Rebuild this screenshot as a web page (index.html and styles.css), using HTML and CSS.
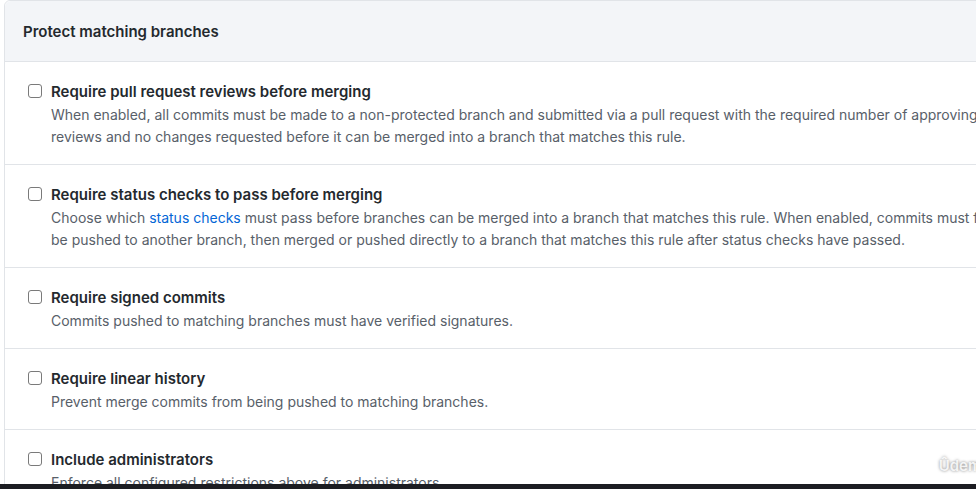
FILE: index.html
```html
<!DOCTYPE html>
<html>
<head>
<meta charset="utf-8">
<link rel="stylesheet" href="styles.css">
</head>
<body>
<div class="stage">
  <div class="card">
    <div class="card-header">Protect matching branches</div>
    <div class="rule">
      <span class="checkbox"></span>
      <div class="rule-body">
        <div class="rule-title">Require pull request reviews before merging</div>
        <div class="rule-desc">When enabled, all commits must be made to a non-protected branch and submitted via a pull request with the required number of approving reviews and no changes requested before it can be merged into a branch that matches this rule.</div>
      </div>
    </div>
    <div class="rule">
      <span class="checkbox"></span>
      <div class="rule-body">
        <div class="rule-title">Require status checks to pass before merging</div>
        <div class="rule-desc">Choose which <a class="link" href="#">status checks</a> must pass before branches can be merged into a branch that matches this rule. When enabled, commits must first be pushed to another branch, then merged or pushed directly to a branch that matches this rule after status checks have passed.</div>
      </div>
    </div>
    <div class="rule">
      <span class="checkbox"></span>
      <div class="rule-body">
        <div class="rule-title">Require signed commits</div>
        <div class="rule-desc">Commits pushed to matching branches must have verified signatures.</div>
      </div>
    </div>
    <div class="rule">
      <span class="checkbox"></span>
      <div class="rule-body">
        <div class="rule-title">Require linear history</div>
        <div class="rule-desc">Prevent merge commits from being pushed to matching branches.</div>
      </div>
    </div>
    <div class="rule">
      <span class="checkbox"></span>
      <div class="rule-body">
        <div class="rule-title">Include administrators</div>
        <div class="rule-desc">Enforce all configured restrictions above for administrators.</div>
      </div>
    </div>
  </div>
  <div class="watermark">Ûdemy</div>
  <div class="player-bar"></div>
</div>
</body>
</html>
```
FILE: styles.css
```css
html, body {
  margin: 0;
  padding: 0;
  background: #fff;
  overflow: hidden;
}
.stage {
  position: relative;
  width: 976px;
  height: 489px;
  overflow: hidden;
  font-family: Inter, "Noto Sans", sans-serif;
}
.card {
  margin-left: 4px;
  width: 1060px;
  border: 1px solid #e1e4e8;
  border-radius: 6px;
  background: #fff;
}
.card-header {
  height: 61px;
  box-sizing: border-box;
  display: flex;
  align-items: center;
  padding-left: 18px;
  padding-top: 1px;
  background: #f3f5f8;
  border-bottom: 1px solid #e1e4e8;
  border-radius: 6px 6px 0 0;
  font-size: 15px;
  font-weight: 600;
  color: #24292e;
}
.rule {
  display: flex;
  align-items: flex-start;
  padding: 18px 0 16px 23px;
  border-bottom: 1px solid #e1e4e8;
}
.checkbox {
  flex: none;
  width: 12px;
  height: 12px;
  margin-top: 4px;
  margin-right: 9px;
  border: 1px solid #7a7a7a;
  border-radius: 3px;
  background: #fff;
}
.rule-body {
  flex: none;
  width: 955px;
}
.rule-title {
  font-size: 15px;
  line-height: 24px;
  font-weight: 600;
  color: #24292e;
}
.rule-desc {
  font-size: 14px;
  line-height: 22px;
  color: #586069;
}
.link {
  color: #0366d6;
  text-decoration: none;
}
.watermark {
  position: absolute;
  right: -14px;
  top: 456px;
  font-size: 15px;
  font-weight: 600;
  color: rgba(255,255,255,0.85);
  text-shadow: 0 0 3px rgba(0,0,0,0.5);
}
.player-bar {
  position: absolute;
  left: 0;
  right: 0;
  bottom: 0;
  height: 5px;
  background: #1c1d22;
}
```
